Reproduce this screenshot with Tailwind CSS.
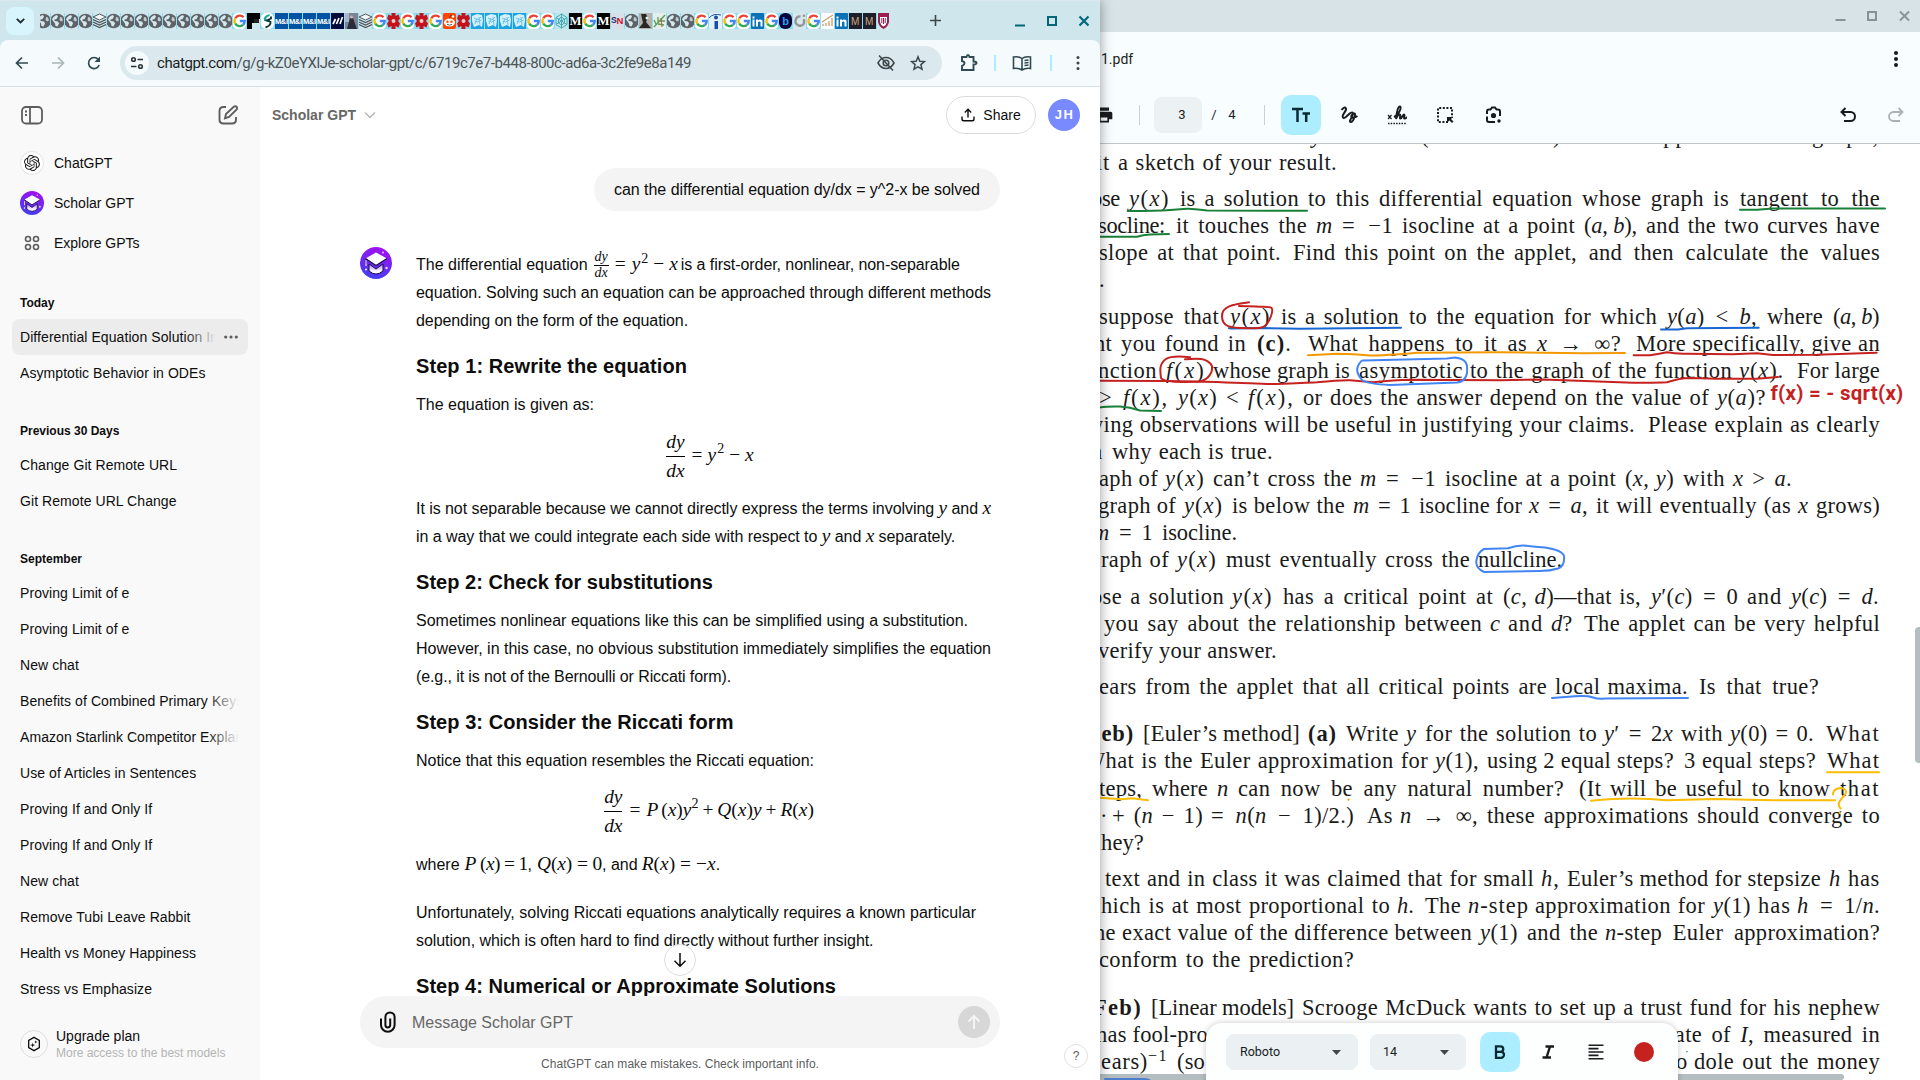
<!DOCTYPE html>
<html lang="en">
<head>
<meta charset="utf-8">
<title>Scholar GPT</title>
<script src="https://cdn.jsdelivr.net/npm/@tailwindcss/browser@4"></script>
</head>
<body class="relative w-[1920px] h-[1080px] overflow-hidden bg-[#f8fdff] font-['Liberation_Sans',Arial,sans-serif] text-[#0d0d0d]">

<svg class="absolute w-0 h-0">
  <defs>
    <linearGradient id="hat" x1="0.6" y1="0" x2="0.3" y2="1"><stop offset="0" stop-color="#a210ee"/><stop offset="1" stop-color="#3f3ff5"/></linearGradient>
    <linearGradient id="face" x1="0" y1="0" x2="0" y2="1"><stop offset="0" stop-color="#b48af5"/><stop offset="0.8" stop-color="#fff"/></linearGradient>
    <symbol id="scholar" viewBox="0 0 32 32">
      <circle cx="16" cy="16" r="16" fill="url(#hat)"/>
      <path d="M9 17v7q7 6 14 0v-7l-7 5z" fill="url(#face)" stroke="#1c0a4d" stroke-width="1"/>
      <path d="M16 5.500 27 11.500 16 18.500 5.500 11.500z" fill="#fff"/>
      <path d="M5.500 11.500 16 18.500 27 11.500M6 12v5" fill="none" stroke="#1c0a4d" stroke-width="1.200"/>
      <path d="M6 13v6" stroke="#fff" stroke-width="1"/>
      <circle cx="23" cy="5.500" r="1" fill="#e9b8ff"/><circle cx="6" cy="22.500" r="1" fill="#fff"/><circle cx="26.500" cy="21" r="1.200" fill="#e9d8ff"/>
    </symbol>
    <symbol id="globe" viewBox="0 0 13 16"><rect width="13" height="16" fill="#cfe6ed"/><circle cx="6.500" cy="8" r="7.300" fill="#5f6368"/><path d="M1 6.500q1-3.500 5-4.500l1 1.500-1.500 2.500-2 .5v1.500l3.500.5 1 2-1.500 3-2-.5-.5-2.500z" fill="#d6e9ee"/><path d="M9 4l2 .5 1 3-2 1-1.500-1.500z" fill="#d6e9ee" opacity=".8"/></symbol>
    <symbol id="stack" viewBox="0 0 13 16"><rect width="13" height="16" fill="#cfe6ed"/><path d="M6.500 1 13 4 6.500 7 0 4z" fill="#f2f8fa" stroke="#50585c"/><path d="M0 6.500 6.500 9.500 13 6.500M0 9l6.500 3L13 9M0 11.500l6.500 3 6.500-3" fill="none" stroke="#50585c" stroke-width="1.300"/></symbol>
    <symbol id="goog" viewBox="0 0 13 16"><rect width="13" height="16" rx="4" fill="#fff"/><g fill="none" stroke-width="2.400"><path d="M2.300 5.300A5 5 0 0 1 10.500 4.300" stroke="#ea4335"/><path d="M2.300 5.300A5 5 0 0 0 2.300 10.700" stroke="#fbbc05"/><path d="M2.300 10.700A5 5 0 0 0 10 11.800" stroke="#34a853"/><path d="M10 11.800A5 5 0 0 0 11.700 8H6.800" stroke="#4285f4"/></g></symbol>
    <symbol id="flip" viewBox="0 0 13 16"><rect width="13" height="16" fill="#cfe6ed"/><path d="M0 0h13v6H7v4H5v6H0z" fill="#000"/><path d="M7 6h5v4H7z" fill="#222"/></symbol>
    <symbol id="ess" viewBox="0 0 13 16"><rect width="13" height="16" rx="5" fill="#fff"/><path d="M8.500 2Q3 4 4 7l5 1" fill="none" stroke="#1aa99a" stroke-width="2.200"/><path d="M4.500 14.500Q10 12.500 9.500 9L6 7.500l4-2V3.500" fill="none" stroke="#12343b" stroke-width="1.900"/></symbol>
    <symbol id="mi" viewBox="0 0 13 16"><rect width="13" height="16" fill="#0353a4"/><text x="0" y="10.500" font-size="7.500" font-weight="bold" fill="#fff" textLength="13" font-family="Liberation Sans">M&amp;I</text></symbol>
    <symbol id="navy" viewBox="0 0 13 16"><rect width="13" height="16" fill="#020a3c"/><path d="M2 11 4.500 6M5.500 11 8 5M9 11 11.500 4" stroke="#fff" stroke-width="1.700"/></symbol>
    <symbol id="photo" viewBox="0 0 13 16"><rect width="13" height="16" fill="#7d8494"/><path d="M2 16 5 5q1-4 3 0l4 11z" fill="#2b2d38"/><circle cx="6.500" cy="4" r="1.600" fill="#c9b8b4"/><path d="M0 0h4v9H0z" fill="#aab4c6"/></symbol>
    <symbol id="gear" viewBox="0 0 13 16"><path d="M4.500 0h4v3l3-1.500 1.500 4-2 2.500 2 2.500-1.500 4-3-1.500v3h-4v-3l-3 1.500L0 10.500 2 8 0 5.500l1.500-4 3 1.500z" fill="#c4131b"/><circle cx="6.500" cy="8" r="2" fill="#e5cfd0"/></symbol>
    <symbol id="reddit" viewBox="0 0 13 16"><rect width="13" height="16" rx="2" fill="#ff4500"/><ellipse cx="6.500" cy="9.500" rx="5.500" ry="4" fill="#fff"/><circle cx="4.500" cy="8.800" r="1.200" fill="#ff4500"/><circle cx="8.500" cy="8.800" r="1.200" fill="#ff4500"/><path d="M4 11.300q2.500 1.700 5 0M6.500 5.500l1-3 2.500.5" stroke="#333" fill="none" stroke-width=".8"/><circle cx="10" cy="3.500" r="1.200" fill="#fff"/></symbol>
    <symbol id="cyan" viewBox="0 0 13 16"><rect width="13" height="16" fill="#1fa3e0"/><path d="M1 3 6 1l5 1 1 5-1 7-3-2-5 2-2-6z" fill="#d4f0fb"/><path d="M3 5l4 2 3-3M3.500 8l3 1 4-2M4 11l2-6M8 4l1 8" stroke="#6cc4ee" fill="none"/></symbol>
    <symbol id="teal" viewBox="0 0 13 16"><rect width="13" height="16" fill="#bfe6ea"/><path d="M6.500 1 12 4.500v7L6.500 15 1 11.500v-7zM6.500 4 9.500 6v4l-3 2-3-2V6zM1 4.500l11 7M12 4.500l-11 7M6.500 1v14" fill="none" stroke="#3aa7b4" stroke-width=".9"/></symbol>
    <symbol id="med" viewBox="0 0 13 16"><rect width="13" height="16" fill="#000"/><text x=".500" y="12" font-size="12" font-weight="bold" fill="#fff" textLength="12" lengthAdjust="spacingAndGlyphs" font-family="Liberation Serif">M</text></symbol>
    <symbol id="sn" viewBox="0 0 13 16"><rect width="13" height="16" fill="#d8dfe6"/><text x="0" y="10" font-size="8.500" font-weight="bold" fill="#1b2f7c" font-family="Liberation Sans">S</text><text x="5.500" y="10.500" font-size="9.500" font-weight="bold" fill="#d3142b" font-family="Liberation Sans">N</text></symbol>
    <symbol id="bw" viewBox="0 0 13 16"><rect width="13" height="16" fill="#b5b1ac"/><path d="M2 1h5l2 4-2 4 5 6H0l4-5z" fill="#2b2826"/><circle cx="8" cy="5" r="1.500" fill="#eee"/></symbol>
    <symbol id="herb" viewBox="0 0 13 16"><rect width="13" height="16" fill="#e3efe8"/><path d="M1 14 12 2M3 11 1 7M5 9 5 4M7 8h5M5 11l6 1" stroke="#5d9a53" stroke-width="1.300"/><path d="M8 5l1 9" stroke="#b3654a"/></symbol>
    <symbol id="info" viewBox="0 0 13 16"><rect width="13" height="16" fill="#e4f2f7"/><circle cx="7" cy="4.500" r="2" fill="#1a4fa3"/><path d="M5.500 8h3.500v8H5.500z" fill="#1a4fa3"/><path d="M0 5Q4 0 12 2" fill="none" stroke="#1a4fa3"/></symbol>
    <symbol id="lin" viewBox="0 0 13 16"><rect width="13" height="16" rx="1" fill="#0a72b5"/><path d="M1.500 6.500h2v7h-2zM1.500 3.500h2v2h-2zM5 6.500h2v1q2-2 4.500 0v6h-2V9q-1-1-2.500 0v4.500H5z" fill="#fff"/></symbol>
    <symbol id="bee" viewBox="0 0 13 16"><rect width="13" height="16" rx="6" fill="#06043b"/><text x="3.200" y="12" font-size="11" font-weight="bold" fill="#26a0f5" font-family="Liberation Sans">b</text></symbol>
    <symbol id="gi" viewBox="0 0 13 16"><rect width="13" height="16" fill="#d9e6ea"/><path d="M7.500 3.500A4.600 4.600 0 1 0 11 10.500V6" fill="none" stroke="#8f9698" stroke-width="2.300"/><circle cx="11" cy="2.800" r="1.300" fill="#8f9698"/></symbol>
    <symbol id="chart" viewBox="0 0 13 16"><rect width="13" height="16" fill="#fff"/><path d="M2 13v-2M5 13v-3M8 13V8M11 13V5M1 9 12 2" stroke="#cba36f" stroke-width="1.400"/></symbol>
    <symbol id="mm" viewBox="0 0 13 16"><rect width="13" height="16" fill="#1d1f2b"/><text x="2" y="11.500" font-size="10" fill="#d5a67b" font-family="Liberation Sans">M</text></symbol>
    <symbol id="shield" viewBox="0 0 13 16"><rect width="13" height="16" fill="#cfe6ed"/><path d="M1 0h11v9q-1 5-5.500 7Q2 14 1 9z" fill="#9c1f4b"/><path d="M3 4h7v5q-.5 3-3.500 4.500Q3.500 12 3 9z" fill="#fff"/><path d="M4.800 5v5M6.500 5v6M8.200 5v5" stroke="#9c1f4b"/></symbol>
  </defs>
</svg>

<!-- PDF editor window -->
<section class="absolute left-[1080px] top-0 w-[840px] h-[1080px] flex flex-col bg-[#f8fdff] font-[Roboto,sans-serif]">
  <header class="h-8 shrink-0 bg-[#d7e3e7] flex items-center justify-end gap-[19px] pr-[9px] text-[#879295]">
    <svg class="w-[13px] h-3" viewBox="0 0 13 12"><path d="M1.500 10h10" stroke="currentColor" stroke-width="2"/></svg>
    <svg class="w-[13px] h-3" viewBox="0 0 13 12"><rect x="2" y="2" width="8" height="8" fill="none" stroke="currentColor" stroke-width="2"/></svg>
    <svg class="w-[13px] h-3" viewBox="0 0 13 12"><path d="m2 1.500 9 9m0-9-9 9" stroke="currentColor" stroke-width="1.800"/></svg>
  </header>
  <div class="h-[54px] shrink-0 flex items-center justify-between pl-[21px] pr-[21px]">
    <span class="text-[14px] text-[#191c1d]">1.pdf</span>
    <svg class="w-1.5 h-[18px]" viewBox="0 0 6 18"><g fill="#191c1d"><circle cx="3" cy="3" r="2"/><circle cx="3" cy="9" r="2"/><circle cx="3" cy="15" r="2"/></g></svg>
  </div>
  <div class="h-[58px] shrink-0 flex items-center border-b border-[#bfc8cb] pl-[14px] pr-[14px] text-[13px] text-[#191c1d]">
    <svg class="w-5 h-5" viewBox="0 0 24 24"><path d="M6 3h12v4H6zM4 8h16a2 2 0 0 1 2 2v7h-4v4H6v-4H2v-7a2 2 0 0 1 2-2m4 7v4h8v-4z" fill="currentColor"/></svg>
    <span class="w-px h-5 bg-[#c9d3d6] ml-[25px]"></span>
    <span class="w-12 h-9 ml-[14px] rounded-lg bg-[#ecf1f3] flex items-center justify-center pl-2">3</span>
    <span class="ml-[6px] w-3 text-center">/</span>
    <span class="ml-1 w-4 text-center">4</span>
    <span class="w-px h-5 bg-[#c9d3d6] ml-[24px]"></span>
    <span class="ml-4 w-10 h-10 rounded-[10px] bg-[#acedff] flex items-center justify-center">
      <svg class="w-5 h-5" viewBox="0 0 20 20"><path d="M1 4h11M6.500 4v13M11.500 8.500H19M15.200 8.500V17" stroke="#0b2b33" stroke-width="2.500" fill="none"/></svg>
    </span>
    <svg class="ml-[18px] w-5 h-5" viewBox="0 0 20 20"><path d="M2.500 5Q5.500 1 7 3.500C8 6 2 10 4 12.500S11 6 13.500 7.500 9 16.500 11.500 17s5-6 4.500-8-4.500 1.500-3.500 3 3.500.500 6-1" fill="none" stroke="currentColor" stroke-width="2"/></svg>
    <svg class="ml-7 w-5 h-5" viewBox="0 0 20 20"><path d="M1 10l3.500 4m0-4L1 14" stroke="currentColor" stroke-width="1.200"/><path d="M7 12C12 10 15 2 13 1.500S9.500 8 9 14c1-3 3-5 4-4.500s-1 4 .5 4 2-4 3.500-4-1 4 .5 4 1.500-.5 2.500-1.500" fill="none" stroke="currentColor" stroke-width="1.900"/><path d="M1 18.500h19" stroke="currentColor" stroke-width="1.400" stroke-dasharray="1.500 1.200"/></svg>
    <svg class="ml-7 w-5 h-5" viewBox="0 0 20 20"><path d="M13 17H3V3h14v10" fill="none" stroke="currentColor" stroke-width="2" stroke-dasharray="2 1.600"/><path d="M12 12h6l-2 2 2.500 2.500-1.500 1.500-2.500-2.500-2.500 2z" fill="currentColor"/></svg>
    <svg class="ml-7 w-5 h-5" viewBox="0 0 20 20"><path d="M4 9V6.500q0-2 2-2h1.500L9 2.500h3L13.500 4.500H15q2 0 2 2V11M4 11.500V15q0 2 2 2h6" fill="none" stroke="currentColor" stroke-width="2"/><circle cx="10.500" cy="10.500" r="2.600" fill="currentColor"/><circle cx="16" cy="16" r="1.700" fill="currentColor"/></svg>
    <svg class="ml-auto w-5 h-5" viewBox="0 0 20 20"><path d="M7.500 3 3.500 7l4 4M4 7h8.500a4.500 4.500 0 0 1 0 9H6" fill="none" stroke="currentColor" stroke-width="2"/></svg>
    <svg class="ml-7 w-5 h-5 text-[#a9b1b3]" viewBox="0 0 20 20"><path d="M12.500 3l4 4-4 4M16 7H7.500a4.500 4.500 0 0 0 0 9H14" fill="none" stroke="currentColor" stroke-width="1.800"/></svg>
  </div>
  <div class="relative grow overflow-hidden bg-white">
    <div id="pdf" class="-mt-[22.5px] font-['Liberation_Serif',serif] text-[22.5px] leading-[27.1px] text-[#1a1a1a] whitespace-pre"></div>
    <span class="absolute right-0 top-[483px] w-[5px] h-[136px] rounded-l bg-[#b4bdc0]"></span>
    <span class="absolute left-0 bottom-0 w-[764px] h-[6px] rounded-r bg-[#b4bdc0]"></span>
  </div>
</section>

<!-- ink annotations -->
<svg class="absolute left-0 top-0 w-[1920px] h-[1080px]" viewBox="0 0 1920 1080" fill="none" stroke-width="2" stroke-linejoin="round" stroke-linecap="round">
  <g stroke="#188038">
    <path d="M1127.700 211Q1157 211 1170 210T1187 208.700 1207 210.500L1307 210.700"/>
    <path d="M1090 236.700H1137Q1143 235 1150 234.500L1169 234"/>
    <path d="M1740 209.700H1757L1773 208.500H1885"/>
    <path d="M1096 407.700Q1110 406 1120 406.500T1140 410.500L1161 411"/>
  </g>
  <g stroke="#1967d2">
    <path d="M1230 328.500 1263 328 1300 328.700 1401 327.700"/>
    <path d="M1661 329.500H1678L1687 328.300 1758.700 327.700"/>
  </g>
  <path stroke="#f29900" d="M1308 355.300 1337 353.700Q1355 354 1370 355.500 1385 355.500 1417 352.700L1500 352.300 1583 353.300 1625 353"/>
  <g stroke="#c5221f">
    <path d="M1249 302.300C1237 304 1222 305 1222 316S1230 328 1247 328.300 1267 327.500 1271 316 1270 307.500 1256 306.500L1239 306"/>
    <path d="M1633.700 355.300H1650Q1660 354 1667 352.300 1675 354 1687 353.700L1733 354.300 1757 353.300 1773 355 1817 354.700 1876.700 352.700"/>
    <path d="M1190 357.300C1178 356 1170 356.500 1166 359 1159 364 1160 370 1161 378 1164 383 1190 382 1200 381.500 1209 379 1213 372 1212 366 1207 357 1195 358.500 1185 359.300"/>
    <path d="M1096 380.700 1167 381 1217 382Q1260 384 1277 384 1305 383 1317 382.300 1340 380 1350 380.300L1373 382.300Q1395 380 1410 379.700L1500 380.300 1543 379.500 1633 382.700Q1655 383 1667 382.300 1680 378 1690 378L1717 378.700 1757 378.700 1778 377"/>
  </g>
  <g stroke="#4285f4">
    <path d="M1363 360.500 1447 358.500 1455 357.500C1466 359 1468 363 1467 373 1466 379 1462 382 1457 382.500L1390 385Q1368 384 1362 380 1355 372 1358 366T1363 360.500"/>
    <path d="M1484 549 1508 548.300Q1516 545.300 1524 545.500 1536 547 1545 547.500 1562 550 1564 556 1565 566 1558 568.500 1550 571 1540 571L1484 572Q1475 568 1476.500 560T1484 549"/>
    <path d="M1552 698 1575 696.300Q1587 695.500 1593 697.500T1605 698.500L1688 698"/>
  </g>
  <g stroke="#fbbc04">
    <path d="M1827 772.300H1879"/>
    <path d="M1096 797.500 1122 799.300 1132 798.300 1148 800.300"/>
    <path d="M1591 800.700Q1620 798 1640 798.700T1667 800.300L1714.700 799 1773 800.300 1835 800.300"/>
    <path d="M1833 794.500C1833 787 1845 786 1846 791.700 1846 797 1834 802 1840.700 808.500M1839.600 812.700v.300"/>
    <path d="M1348.500 799.500v.2" stroke="#f29900"/>
  </g>
  <path d="M1105 1079H1144Q1148 1079 1151 1081" stroke="#4d7fd0"/>
  <path d="M1687 1051.500v.2" stroke="#4285f4" stroke-width="1.500"/>
</svg>
<span data-fit="133" class="absolute left-[1770.500px] top-[381px] font-[Roboto,sans-serif] text-[20.5px] leading-6 font-bold text-[#c5221f] whitespace-pre">f(x) = - sqrt(x)</span>

<!-- text formatting bar -->
<div class="absolute left-[1206px] top-[1023px] w-[472px] h-[70px] rounded-t-2xl bg-[#fdffff] shadow-[0_0_6px_rgba(0,0,0,0.22)] flex items-start pt-[9px] pl-5 font-[Roboto,sans-serif] text-[12.500px] text-[#191c1d]">
  <span class="flex items-center justify-between w-[132px] h-9 mt-0.5 rounded-lg bg-[#ebf0f2] pl-[14px] pr-[17px]">Roboto<svg class="w-[9px] h-[5px]" viewBox="0 0 9 5"><path d="M0 0h9L4.500 5z" fill="#3f484b"/></svg></span>
  <span class="flex items-center justify-between w-24 h-9 mt-0.5 ml-3 rounded-lg bg-[#ebf0f2] pl-[13px] pr-[17px]">14<svg class="w-[9px] h-[5px]" viewBox="0 0 9 5"><path d="M0 0h9L4.500 5z" fill="#3f484b"/></svg></span>
  <span class="flex items-center justify-center w-10 h-10 ml-[14px] rounded-[10px] bg-[#acedff]"><svg class="w-5 h-5" viewBox="0 0 20 20"><path d="M6 4.300h4.500a2.700 2.700 0 0 1 0 5.500H6zM6 9.800h5a3 3 0 0 1 0 6H6z" fill="none" stroke="#0b2b33" stroke-width="2.300"/></svg></span>
  <svg class="w-5 h-5 ml-[18px] mt-[10px]" viewBox="0 0 20 20"><path d="M7.500 4.500H16M4.500 15.500H13M12 4.500l-3.500 11" fill="none" stroke="currentColor" stroke-width="2.400"/></svg>
  <svg class="w-5 h-5 ml-7 mt-[10px]" viewBox="0 0 20 20"><path d="M2.500 3.200h15M2.500 6.600h10M2.500 10h15M2.500 13.400h10M2.500 16.800h15" stroke="currentColor" stroke-width="1.600"/></svg>
  <span class="w-5 h-5 ml-7 mt-[10px] rounded-full bg-[#c5221f]"></span>
</div>

<!-- browser window -->
<section class="absolute left-0 top-0 w-[1100px] h-[1080px] flex flex-col bg-[#cfe6ed] shadow-[0_0_12px_rgba(0,0,0,0.4)]">
  <header class="h-10 shrink-0 flex items-center border-t border-[#dbe9ee] pl-1.5">
    <span class="w-7 h-7 rounded-lg bg-[#d8f5fd] flex items-center justify-center"><svg class="w-[9px] h-[6px]" viewBox="0 0 9 6"><path d="m.8.8 3.700 3.700L8.200.8" fill="none" stroke="#1f2a2d" stroke-width="1.800"/></svg></span>
    <div id="tabs" class="flex items-center gap-px ml-1.5 h-4 bg-[#8ddcef]"></div>
    <svg class="ml-10 w-[11px] h-[11px]" viewBox="0 0 11 11"><path d="M5.500 0v11M0 5.500h11" stroke="#3c474a" stroke-width="1.600"/></svg>
    <div class="flex items-center gap-5 ml-auto mr-[10px] text-[#00677b]">
      <svg class="w-3 h-3" viewBox="0 0 12 12"><path d="M1 10.500h10" stroke="currentColor" stroke-width="2"/></svg>
      <svg class="w-3 h-3" viewBox="0 0 12 12"><rect x="2" y="2" width="8" height="8" fill="none" stroke="currentColor" stroke-width="2"/></svg>
      <svg class="w-3 h-3" viewBox="0 0 12 12"><path d="m1.500 1.500 9 9m0-9-9 9" stroke="currentColor" stroke-width="2.200"/></svg>
    </div>
  </header>
  <div class="h-[47px] shrink-0 flex items-center rounded-t-lg bg-[#f5fafd] border-b border-[#d2e2e8] pl-[14px] text-[#3c4a4e]">
    <svg class="w-4 h-4" viewBox="0 0 16 16"><path d="M14 8H2.500M8 2.500 2.500 8 8 13.500" fill="none" stroke="#2f4a51" stroke-width="1.700"/></svg>
    <svg class="w-4 h-4 ml-5" viewBox="0 0 16 16"><path d="M2 8h11.500M8 2.500 13.500 8 8 13.500" fill="none" stroke="#a9b5b8" stroke-width="1.700"/></svg>
    <svg class="w-4 h-4 ml-5" viewBox="0 0 16 16"><path d="M13.200 10A5.500 5.500 0 1 1 12.300 4.500" fill="none" stroke="#2f4a51" stroke-width="1.700"/><path d="M14 1.500V7H8.500z" fill="#2f4a51"/></svg>
    <div class="ml-[18px] w-[822px] h-[34px] rounded-full bg-[#dbe9ee] flex items-center pl-[5px] pr-[16px]">
      <span class="w-6 h-6 rounded-full bg-[#f5fafd] flex items-center justify-center"><svg class="w-3.5 h-3.5" viewBox="0 0 14 14" fill="none" stroke="#2b3437" stroke-width="1.600"><circle cx="3.500" cy="3.500" r="1.800"/><path d="M7.500 3.500H13M1 10.500h5.500"/><circle cx="10.500" cy="10.500" r="1.800"/></svg></span>
      <span data-fit="534" class="ml-2 text-[15px] font-[Roboto,sans-serif] text-[#4b5457] whitespace-pre"><span class="text-[#191c1d]">chatgpt.com</span>/g/g-kZ0eYXlJe-scholar-gpt/c/6719c7e7-b448-800c-ad6a-3c2fe9e8a149</span>
      <svg class="ml-auto w-[18px] h-[18px]" viewBox="0 0 18 18" fill="none" stroke="#3f484b" stroke-width="1.600"><path d="M1 9q3-5.500 8-5.500T17 9q-3 5.500-8 5.500T1 9z"/><circle cx="9" cy="9" r="2.800"/><path d="M2 1.500 16 16.500"/></svg>
      <svg class="ml-[15px] w-4 h-4" viewBox="0 0 16 16" fill="none" stroke="#3f484b" stroke-width="1.500"><path d="m8 1.800 1.800 4.400 4.700.4-3.600 3 1.100 4.600L8 11.800l-4 2.400 1.100-4.600-3.600-3 4.700-.4z"/></svg>
    </div>
    <svg class="ml-[18px] w-[18px] h-[18px]" viewBox="0 0 18 18" fill="none" stroke="#2f4a51" stroke-width="1.900"><path d="M2 3h4.500q.5-2 1.500-2t1.500 2h4v4.500q3 0 3 1.500t-3 1.500V16H2v-4q2.500-1 2.500-2.700T2 7z"/></svg>
    <span class="ml-[16px] w-0.5 h-4 bg-[#acedff]"></span>
    <svg class="ml-4 w-5 h-5" viewBox="0 0 20 20" fill="none" stroke="#2f4a51" stroke-width="1.600"><path d="M10 5.500Q7 3 1.500 4v11.500q5-.8 8.500 1.500 3.500-2.300 8.500-1.500V4Q13 3 10 5.500zM10 5.500V17M12.500 7.500l4-.5M12.500 10l4-.5M12.500 12.500l4-.5"/></svg>
    <span class="ml-[18px] w-0.5 h-4 bg-[#acedff]"></span>
    <svg class="ml-[24px] w-1 h-4" viewBox="0 0 4 16"><g fill="#3c474a"><circle cx="2" cy="2.500" r="1.500"/><circle cx="2" cy="8" r="1.500"/><circle cx="2" cy="13.500" r="1.500"/></g></svg>
  </div>

  <div class="grow flex min-h-0 bg-white">
    <!-- sidebar -->
    <aside class="w-[260px] shrink-0 bg-[#f9f9f9] flex flex-col text-[14px]">
      <div class="h-14 shrink-0 flex items-center justify-between px-5 text-[#5d5d5d]">
        <svg class="w-6 h-6" viewBox="0 0 24 24" fill="none" stroke="currentColor" stroke-width="1.800"><rect x="2" y="4" width="20" height="16.500" rx="4"/><path d="M10 4v16.500M5 8.500h2M5 12h2"/></svg>
        <svg class="w-6 h-6" viewBox="0 0 24 24" fill="none" stroke="currentColor" stroke-width="1.900"><path d="M10 4H7.500Q3.500 4 3.500 8v8.500q0 4 4 4H16q4 0 4-4V14M18 3.500q1.800-.8 2.700.4t0 2.600L13 14l-4 1.300 1-4.300z"/></svg>
      </div>
      <div class="h-10 shrink-0 flex items-center gap-2.5 px-5"><span class="w-6 h-6 rounded-full bg-white border border-[#e5e5e5] flex items-center justify-center"><svg class="w-4 h-4" viewBox="0 0 24 24"><path d="M22.282 9.821a5.985 5.985 0 0 0-.516-4.910 6.046 6.046 0 0 0-6.510-2.900A6.065 6.065 0 0 0 4.981 4.182a5.985 5.985 0 0 0-3.998 2.900 6.046 6.046 0 0 0 .743 7.097 5.980 5.980 0 0 0 .511 4.911 6.051 6.051 0 0 0 6.515 2.900A5.985 5.985 0 0 0 13.260 24a6.056 6.056 0 0 0 5.772-4.206 5.989 5.989 0 0 0 3.998-2.900 6.056 6.056 0 0 0-.748-7.073zm-9.022 12.608a4.476 4.476 0 0 1-2.876-1.041l.142-.080 4.778-2.758a.795.795 0 0 0 .393-.681v-6.737l2.020 1.169a.071.071 0 0 1 .038.052v5.583a4.504 4.504 0 0 1-4.495 4.494zm-9.661-4.125a4.471 4.471 0 0 1-.535-3.014l.142.085 4.783 2.758a.771.771 0 0 0 .781 0l5.843-3.369v2.332a.080.080 0 0 1-.033.062L9.740 19.950a4.499 4.499 0 0 1-6.141-1.646zM2.341 7.896a4.485 4.485 0 0 1 2.366-1.973V11.600a.766.766 0 0 0 .388.677l5.814 3.354-2.020 1.169a.076.076 0 0 1-.071 0l-4.830-2.787A4.504 4.504 0 0 1 2.341 7.872zm16.596 3.856L13.104 8.364 15.119 7.200a.076.076 0 0 1 .071 0l4.830 2.791a4.494 4.494 0 0 1-.677 8.104v-5.677a.790.790 0 0 0-.407-.667zm2.011-3.023l-.142-.085-4.774-2.782a.776.776 0 0 0-.785 0L9.409 9.230V6.897a.066.066 0 0 1 .028-.062l4.830-2.787a4.499 4.499 0 0 1 6.680 4.660zM8.307 12.863l-2.020-1.164a.080.080 0 0 1-.038-.057V6.074a4.499 4.499 0 0 1 7.376-3.454l-.142.081L8.704 5.459a.795.795 0 0 0-.393.681zm1.098-2.365l2.602-1.500 2.607 1.500v2.999l-2.597 1.500-2.607-1.500Z" fill="#222"/></svg></span>ChatGPT</div>
      <div class="h-10 shrink-0 flex items-center gap-2.5 px-5"><svg class="w-6 h-6"><use href="#scholar"/></svg>Scholar GPT</div>
      <div class="h-10 shrink-0 flex items-center gap-2.5 px-5"><svg class="w-6 h-6" viewBox="0 0 24 24" fill="none" stroke="#5d5d5d" stroke-width="1.600"><circle cx="8" cy="8" r="2.500"/><circle cx="16" cy="8" r="2.500"/><circle cx="8" cy="16" r="2.500"/><circle cx="16" cy="16" r="2.500"/></svg>Explore GPTs</div>
      <nav id="history" class="grow min-h-0 overflow-hidden px-3"></nav>
      <div class="h-[72px] shrink-0 flex items-center gap-2 pl-5">
        <span class="w-7 h-7 rounded-full border border-[#dedede] flex items-center justify-center"><svg class="w-4 h-4" viewBox="0 0 18 18" fill="none" stroke="#111" stroke-width="1.500"><path d="M9 1.500 15 5v8l-6 3.500L3 13V5z"/><path d="m7.500 7.500.7 2 2 .7-2 .7-.7 2-.7-2-2-.7 2-.7zM11 5l.5 1.300 1.300.5-1.300.5L11 8.500l-.5-1.200-1.300-.5 1.300-.5z" fill="#111" stroke="none"/></svg></span>
        <span class="flex flex-col"><span class="leading-[18px]">Upgrade plan</span><span class="text-[12px] leading-4 text-[#b4b4b4]">More access to the best models</span></span>
      </div>
    </aside>

    <!-- conversation -->
    <main class="relative grow flex flex-col">
      <div class="h-14 shrink-0 flex items-center pl-3 pr-5 text-[14px]">
        <span class="font-bold text-[#676767]">Scholar GPT</span>
        <svg class="ml-2 w-3 h-2" viewBox="0 0 12 8"><path d="m1 1.500 5 5 5-5" fill="none" stroke="#b4b4b4" stroke-width="1.400"/></svg>
        <span class="ml-auto w-[90px] h-[38px] rounded-full border border-[#dcdcdc] flex items-center justify-center gap-2"><svg class="w-[14px] h-[14px]" viewBox="0 0 14 14" fill="none" stroke="#0d0d0d" stroke-width="1.400"><path d="M7 9.500V1.500M3.800 4.500 7 1.300l3.200 3.200M1 8.500v2.500q0 1.800 1.800 1.800h8.400q1.800 0 1.800-1.800V8.500"/></svg>Share</span>
        <span class="ml-3 w-8 h-8 rounded-full bg-[#7989ff] text-white text-[13px] font-bold tracking-[1.500px] flex items-center justify-center pl-px">JH</span>
      </div>
      <div class="grow min-h-0 overflow-hidden px-[100px] text-[16px] leading-7">
        <div class="flex justify-end pt-[25px]"><span class="h-[43px] rounded-full bg-[#f4f4f4] px-5 leading-[43px]"><span data-fit="366">can the differential equation dy/dx = y^2-x be solved</span></span></div>
        <div class="flex gap-6 mt-[39px]">
          <svg class="w-8 h-8 shrink-0 -mt-[3px]"><use href="#scholar"/></svg>
          <div class="w-[584px] shrink-0 whitespace-nowrap">
            <div class="h-7 mt-px -mb-px flex items-center"><span data-fit="171.600">The differential equation</span>
              <span class="inline-flex flex-col items-center ml-1.5 font-['Liberation_Serif',serif] italic text-[14px] leading-[14px]"><span class="border-b border-black px-px pb-px">dy</span><span>dx</span></span>
              <span class="inline-flex items-baseline w-[72px] font-['Liberation_Serif',serif] text-[19.400px]"><span class="ml-1.5 mr-1.5">=</span><i>y</i><span class="text-[14px] -translate-y-[7px] ml-px">2</span><span class="mx-[5px]">−</span><i>x</i></span>
              <span data-fit="279">is a first-order, nonlinear, non-separable</span></div>
            <p class="pt-px -mb-px"><span data-fit="575">equation. Solving such an equation can be approached through different methods</span><br><span data-fit="272">depending on the form of the equation.</span></p>
            <h3 class="mt-4 mb-2 text-[20px] leading-8 font-bold"><span data-fit="271">Step 1: Rewrite the equation</span></h3>
            <p class="pt-px -mb-px"><span data-fit="178">The equation is given as:</span></p>
            <div class="h-[76px] flex items-center justify-center pl-1 font-['Liberation_Serif',serif] text-[19.400px]">
              <span class="flex flex-col items-center italic leading-[22px]"><span class="border-b border-black pb-[3px]">dy</span><span class="pt-[3px]">dx</span></span>
              <span class="flex items-baseline"><span class="ml-[7px] mr-[5px]">=</span><i>y</i><span class="text-[14px] -translate-y-[8px] ml-px">2</span><span class="mx-[5px]">−</span><i>x</i></span>
            </div>
            <p class="pt-px -mb-px"><span data-fit="575">It is not separable because we cannot directly express the terms involving <i class="font-['Liberation_Serif',serif] text-[19.400px] leading-none">y</i> and <i class="font-['Liberation_Serif',serif] text-[19.400px] leading-none">x</i></span><br><span data-fit="539">in a way that we could integrate each side with respect to <i class="font-['Liberation_Serif',serif] text-[19.400px] leading-none">y</i> and <i class="font-['Liberation_Serif',serif] text-[19.400px] leading-none">x</i> separately.</span></p>
            <h3 class="mt-4 mb-2 text-[20px] leading-8 font-bold"><span data-fit="297">Step 2: Check for substitutions</span></h3>
            <p class="pt-px -mb-px"><span data-fit="552">Sometimes nonlinear equations like this can be simplified using a substitution.</span><br><span data-fit="575">However, in this case, no obvious substitution immediately simplifies the equation</span><br><span data-fit="315">(e.g., it is not of the Bernoulli or Riccati form).</span></p>
            <h3 class="mt-4 mb-2 text-[20px] leading-8 font-bold"><span data-fit="317.500">Step 3: Consider the Riccati form</span></h3>
            <p class="pt-px -mb-px"><span data-fit="398">Notice that this equation resembles the Riccati equation:</span></p>
            <div class="h-[74px] mb-0.5 flex items-center justify-center pl-0.5 font-['Liberation_Serif',serif] text-[19.400px]">
              <span class="flex flex-col items-center italic leading-[22px]"><span class="border-b border-black pb-[3px]">dy</span><span class="pt-[3px]">dx</span></span>
              <span class="flex items-baseline"><span class="ml-[7px] mr-[6px]">=</span><i class="mr-[3px]">P</i>(<i>x</i>)<i>y</i><span class="text-[14px] -translate-y-[8px]">2</span><span class="mx-1">+</span><i>Q</i>(<i>x</i>)<i>y</i><span class="mx-1">+</span><i>R</i>(<i>x</i>)</span>
            </div>
            <div class="h-7 flex items-baseline">where<span data-fit="63" class="ml-[5px] font-['Liberation_Serif',serif] text-[19.400px] whitespace-pre"><i>P</i> (<i>x</i>) = 1</span><span>,</span><span data-fit="65" class="ml-[5px] font-['Liberation_Serif',serif] text-[19.400px] whitespace-pre"><i>Q</i>(<i>x</i>) = 0</span><span>, and</span><span data-fit="74" class="ml-1 font-['Liberation_Serif',serif] text-[19.400px] whitespace-pre"><i>R</i>(<i>x</i>) = −<i>x</i></span><span>.</span></div>
            <p class="mt-5 pt-px -mb-px"><span data-fit="560">Unfortunately, solving Riccati equations analytically requires a known particular</span><br><span data-fit="457.500">solution, which is often hard to find directly without further insight.</span></p>
            <h3 class="mt-4 text-[20px] leading-8 font-bold"><span data-fit="420">Step 4: Numerical or Approximate Solutions</span></h3>
          </div>
        </div>
      </div>
      <div class="shrink-0 h-[84px] bg-white px-[100px] text-[16px]">
        <div class="h-[52px] rounded-full bg-[#f4f4f4] flex items-center pl-[18px] pr-[10px]">
          <svg class="w-5 h-6" viewBox="0 0 20 24" fill="none" stroke="#0d0d0d" stroke-width="2"><path d="M3 8.500V15a6.800 6.800 0 0 0 13.600 0V7a4.600 4.600 0 0 0-9.200 0v8a2.400 2.400 0 0 0 4.800 0V8.500"/></svg>
          <span class="ml-[14px] pt-0.5 text-[#676767]">Message Scholar GPT</span>
          <span class="ml-auto w-8 h-8 rounded-full bg-[#d7d7d7] flex items-center justify-center"><svg class="w-4 h-4" viewBox="0 0 16 16"><path d="M8 15V2M2.500 7.500 8 2l5.500 5.500" fill="none" stroke="#f4f4f4" stroke-width="2"/></svg></span>
        </div>
        <p class="mt-2 text-center text-[12px] leading-4 text-[#5d5d5d]"><span data-fit="278">ChatGPT can make mistakes. Check important info.</span></p>
      </div>
      <span class="absolute left-[404px] top-[857px] w-8 h-8 rounded-full bg-white border border-[#dedede] flex items-center justify-center"><svg class="w-4 h-4" viewBox="0 0 16 16"><path d="M8 1v13M2.500 8.800 8 14.300l5.500-5.500" fill="none" stroke="#0d0d0d" stroke-width="1.500"/></svg></span>
      <span class="absolute right-3 bottom-3 w-6 h-6 rounded-full bg-white border border-[#e0e0e0] flex items-center justify-center text-[12px] text-[#5d5d5d]">?</span>
    </main>
  </div>
</section>

<script>
// tab favicons; the first one is narrower
const tabs = 'globe globe globe globe stack globe globe globe globe globe globe globe globe globe goog flip ess mi mi mi mi navy photo stack goog gear goog gear goog reddit gear cyan cyan cyan cyan goog goog teal med goog med sn globe bw herb globe globe goog info goog goog lin goog bee gi goog chart lin mm mm shield'.split(' ');
document.getElementById('tabs').innerHTML = tabs.map((t, i) =>
  `<svg class="${i ? 'w-[13px]' : 'w-[10px]'} h-4 shrink-0" viewBox="${i ? '0 0 13 16' : '3 0 10 16'}"><use href="#${t}" width="13" height="16"/></svg>`).join('');

// sidebar history
const groups = [
  ['Today', ['Differential Equation Solution Insights', 'Asymptotic Behavior in ODEs']],
  ['Previous 30 Days', ['Change Git Remote URL', 'Git Remote URL Change']],
  ['September', ['Proving Limit of e', 'Proving Limit of e', 'New chat', 'Benefits of Combined Primary Keys', 'Amazon Starlink Competitor Explained', 'Use of Articles in Sentences', 'Proving If and Only If', 'Proving If and Only If', 'New chat', 'Remove Tubi Leave Rabbit', 'Health vs Money Happiness', 'Stress vs Emphasize']]
];
document.getElementById('history').innerHTML = groups.map(([h, items], g) =>
  `<div class="mt-5 h-9 flex items-center pl-2 pt-[3px] text-[12px] font-bold">${h}</div>` + items.map((t, i) => {
    const on = !g && !i;
    return `<div class="h-9 flex items-center px-2 rounded-lg whitespace-nowrap tracking-[0.07px] ${on ? 'bg-[#ececec]' : ''}">
      <span class="relative overflow-hidden ${on ? 'w-[196px]' : 'w-[219px]'}">${t}<span class="absolute right-0 inset-y-0 w-8 bg-linear-to-l ${on ? 'from-[#ececec]' : 'from-[#f9f9f9]'} to-transparent"></span></span>
      ${on ? '<svg class="ml-2 w-4 h-4" viewBox="0 0 16 16"><g fill="#5d5d5d"><circle cx="1.700" cy="8" r="1.600"/><circle cx="7" cy="8" r="1.600"/><circle cx="12.300" cy="8" r="1.600"/></g></svg>' : ''}</div>`;
  }).join('')).join('');

// document lines: runs of [start, end, text]; _.._ italic, *..* bold
const X = 1080;
const paras = [
  [0, [[[1312,1324,'_y_'],[1421,1428,'('],[1553,1560,')'],[1652,1714,'applet'],[1812,1880,'graph,']],
       [[1096,1110,'it'],[1118,1337,'a sketch of your result.']]]],
  [9, [[[1091,1120,'ose'],[1129,1170,'_y_(_x_)'],[1180,1299,'is a solution'],[1308,1729,'to this differential equation whose graph is'],[1740,1880,'tangent to the']],
       [[1098,1165,'socline:'],[1176,1307,'it touches the'],[1316,1335,'_m_'],[1342,1393,'= −1'],[1402,1575,'isocline at a point'],[1584,1637,'(_a_, _b_),'],[1646,1880,'and the two curves have']],
       [[1099,1281,'slope at that point.'],[1293,1505,'Find this point on the'],[1514,1880,'applet, and then calculate the values']],
       [[1099,1104,'.']]]],
  [9.5, [[[1099,1219,'suppose that'],[1230,1271,'_y_(_x_)'],[1281,1399,'is a solution'],[1409,1657,'to the equation for which'],[1667,1757,'_y_(_a_) &lt; _b_,'],[1767,1823,'where'],[1833,1879,'(_a_, _b_)']],
       [[1094,1246,'nt you found in'],[1257,1292,'*(c)*.'],[1308,1527,'What happens to it as'],[1537,1621,'_x_ → ∞?'],[1636,1880,'More specifically, give an']],
       [[1098,1157,'nction'],[1166,1206,'_f_(_x_)'],[1213,1350,'whose graph is'],[1359,1463,'asymptotic'],[1470,1732,'to the graph of the function'],[1739,1784,'_y_(_x_).'],[1797,1880,'For large']],
       [[1099,1113,'&gt;'],[1123,1169,'_f_(_x_),'],[1178,1218,'_y_(_x_)'],[1226,1240,'&lt;'],[1248,1295,'_f_(_x_),'],[1303,1709,'or does the answer depend on the value of'],[1717,1766,'_y_(_a_)?']],
       [[1092,1635,'ying observations will be useful in justifying your claims.'],[1648,1880,'Please explain as clearly']],
       [[1091,1103,'n'],[1112,1273,'why each is true.']],
       [[1099,1158,'aph of'],[1165,1205,'_y_(_x_)'],[1213,1352,'can’t cross the'],[1360,1379,'_m_'],[1386,1436,'= −1'],[1445,1616,'isocline at a point'],[1625,1674,'(_x_, _y_)'],[1683,1725,'with'],[1733,1792,'_x_ &gt; _a_.']],
       [[1098,1176,'graph of'],[1184,1223,'_y_(_x_)'],[1232,1345,'is below the'],[1353,1411,'_m_ = 1'],[1419,1522,'isocline for'],[1529,1588,'_x_ = _a_,'],[1596,1791,'it will eventually (as'],[1798,1808,'_x_'],[1816,1880,'grows)']],
       [[1093,1112,'_m_'],[1119,1153,'= 1'],[1162,1237,'isocline.']],
       [[1101,1169,'raph of'],[1177,1217,'_y_(_x_)'],[1226,1470,'must eventually cross the'],[1478,1562,'nullcline.']]]],
  [9, [[[1091,1224,'ose a solution'],[1232,1273,'_y_(_x_)'],[1283,1493,'has a critical point at'],[1503,1641,'(_c_, _d_)—that is,'],[1651,1738,'_y_′(_c_) = 0'],[1747,1782,'and'],[1791,1879,'_y_(_c_) = _d_.']],
       [[1104,1482,'you say about the relationship between'],[1490,1499,'_c_'],[1508,1543,'and'],[1551,1572,'_d_?'],[1584,1880,'The applet can be very helpful']],
       [[1098,1277,'verify your answer.']]]],
  [9.500, [[[1099,1547,'ears from the applet that all critical points are'],[1555,1688,'local maxima.'],[1699,1819,'Is that true?']]]],
  [20, [[[1087,1134,'*Feb)*'],[1143,1300,'[Euler’s method]'],[1308,1337,'*(a)*'],[1346,1399,'Write'],[1406,1417,'_y_'],[1425,1597,'for the solution to'],[1604,1673,'_y_′ = 2_x_'],[1681,1723,'with'],[1730,1814,'_y_(0) = 0.'],[1826,1880,'What']],
       [[1084,1428,'What is the Euler approximation for'],[1435,1479,'_y_(1),'],[1487,1674,'using 2 equal steps?'],[1684,1816,'3 equal steps?'],[1827,1880,'What']],
       [[1099,1142,'teps,'],[1152,1208,'where'],[1217,1229,'_n_'],[1238,1564,'can now be any natural number?'],[1579,1830,'(It will be useful to know'],[1840,1880,'that']],
       [[1100,1106,'·'],[1112,1203,'+ (_n_ − 1)'],[1211,1354,'= _n_(_n_ − 1)/2.)'],[1367,1393,'As'],[1400,1478,'_n_ → ∞,'],[1487,1880,'these approximations should converge to']],
       [[1101,1144,'hey?']]]],
  [9, [[[1105,1534,'text and in class it was claimed that for small'],[1541,1560,'_h_,'],[1567,1821,'Euler’s method for stepsize'],[1829,1840,'_h_'],[1848,1880,'has']],
       [[1101,1390,'hich is at most proportional to'],[1397,1414,'_h_.'],[1425,1461,'The'],[1468,1529,'_n_-step'],[1535,1705,'approximation for'],[1713,1751,'_y_(1)'],[1758,1791,'has'],[1797,1880,'_h_ = 1/_n_.']],
       [[1094,1472,'he exact value of the difference between'],[1480,1518,'_y_(1)'],[1527,1598,'and the'],[1605,1880,'_n_-step Euler approximation?']],
       [[1099,1354,'conform to the prediction?']]]],
  [20.500, [[[1093,1142,'*Feb)*'],[1151,1294,'[Linear models]'],[1302,1880,'Scrooge McDuck wants to set up a trust fund for his nephew']],
       [[1096,1227,'has fool-proof'],[1667,1880,'rate of _I_, measured in']],
       [[1101,1148,'ears)'],[1148,1168,'<sup class="text-[16px]">−1</sup>'],[1177,1205,'(so'],[1676,1687,'o'],[1694,1880,'dole out the money']]]]
];
document.getElementById('pdf').innerHTML = paras.map(([gap, lines]) =>
  `<div style="padding-top:${gap}px">` + lines.map(runs => {
    let at = X;
    return '<div class="h-[27.1px] flex items-baseline">' + runs.map(([a, b, t]) => {
      const html = t.replace(/_(.+?)_/g, '<i>$1</i>').replace(/\*(.+?)\*/g, '<b>$1</b>');
      const s = `<span class="shrink-0" style="margin-left:${a - at}px;width:${b - a}px"><span data-fit="${b - a}">${html}</span></span>`;
      at = b;
      return s;
    }).join('') + '</div>';
  }).join('') + '</div>').join('');

// stretch each run to its width: spare room goes to the word gaps, a shortage is taken from all letters
function fit() {
  document.querySelectorAll('[data-fit]').forEach(el => {
    const w = +el.dataset.fit, n = el.textContent.length, gaps = el.textContent.split(' ').length - 1;
    const byWord = el.closest('#pdf') && gaps;
    const base = byWord ? 0.35 : 0;
    el.style.wordSpacing = '0px';
    el.style.letterSpacing = base + 'px';
    const extra = w - el.getBoundingClientRect().width;
    if (byWord && extra > 0) el.style.wordSpacing = extra / gaps + 'px';
    else el.style.letterSpacing = base + extra / n + 'px';
  });
}
fit();
addEventListener('load', fit);
document.fonts.ready.then(fit);
[50, 200, 500].forEach(t => setTimeout(fit, t));
</script>
</body>
</html>
